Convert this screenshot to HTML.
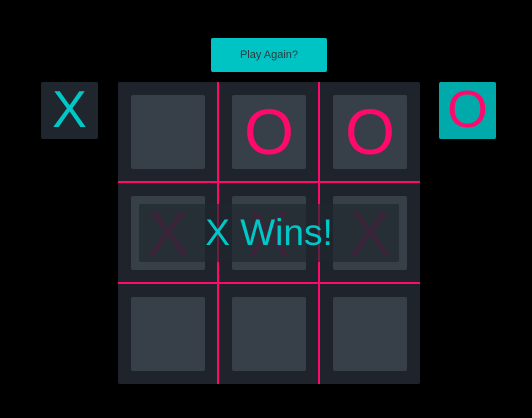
<!DOCTYPE html>
<html><head><style>
*{margin:0;padding:0;box-sizing:border-box}
body{width:532px;height:418px;background:#000;position:relative;overflow:hidden;font-family:"Liberation Sans",sans-serif}
.abs{position:absolute}
.btn{left:211px;top:38px;width:116px;height:34px;background:#00c4c4;border-radius:2px;color:#2a3a40;font-size:11px;text-align:center;line-height:34px}
.side{top:82px;width:57px;height:57px;border-radius:2px;text-align:center;font-size:52px;line-height:57px}
.board{left:118px;top:82px;width:302px;height:302px;background:#1f232b;border-radius:2px}
.cell{width:74px;height:74px;background:#373f48;border-radius:2px;text-align:center;line-height:74px;font-size:64px}
.vl{width:2px;height:302px;top:82px;background:#ff0a6c}
.hl{height:2px;width:302px;left:118px;background:#ff0a6c}
</style></head><body>
<div class="abs btn">Play Again?</div>
<div class="abs side" style="left:41px;background:#1f262d;color:#00c8c8">X</div>
<div class="abs side" style="left:439px;background:#00aaaa;color:#ff0a6c">O</div>
<div class="abs board"></div>
<div class="abs cell" style="left:131px;top:95px"></div>
<div class="abs cell" style="left:232px;top:95px;color:#ff0a6c">O</div>
<div class="abs cell" style="left:333px;top:95px;color:#ff0a6c">O</div>
<div class="abs cell" style="left:131px;top:196px;color:#6a2050">X</div>
<div class="abs cell" style="left:232px;top:196px;color:#6a2050">X</div>
<div class="abs cell" style="left:333px;top:196px;color:#6a2050">X</div>
<div class="abs cell" style="left:131px;top:297px"></div>
<div class="abs cell" style="left:232px;top:297px"></div>
<div class="abs cell" style="left:333px;top:297px"></div>
<div class="abs vl" style="left:217px"></div>
<div class="abs vl" style="left:318px"></div>
<div class="abs hl" style="top:181px"></div>
<div class="abs hl" style="top:282px"></div>
<div class="abs" style="left:139px;top:204px;width:260px;height:58px;background:rgba(31,38,45,0.65);border-radius:2px;color:#00c8c8;font-size:37px;text-align:center;line-height:58px">X Wins!</div>
</body></html>
